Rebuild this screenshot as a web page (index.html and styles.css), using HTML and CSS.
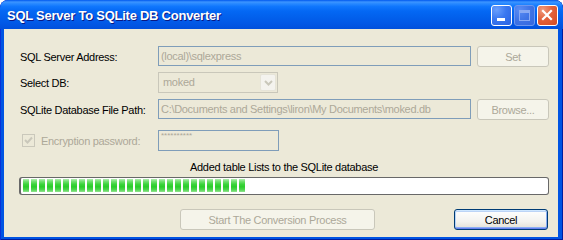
FILE: index.html
```html
<!DOCTYPE html>
<html lang="en">
<head>
  <meta charset="UTF-8" />
  <title>SQL Server To SQLite DB Converter</title>
  <link rel="stylesheet" href="styles.css">
</head>
<body>
  <div class="window">
    <div class="titlebar">
      <span class="title">SQL Server To SQLite DB Converter</span>
      <div class="controls">
        <span class="ctl ctl-min"><i></i></span>
        <span class="ctl ctl-max"><i></i></span>
        <span class="ctl ctl-close">
          <svg width="21" height="21" viewBox="0 0 21 21">
            <path d="M6 6 L14 14 M14 6 L6 14" stroke="#fff" stroke-width="2.2" stroke-linecap="square" fill="none"/>
          </svg>
        </span>
      </div>
    </div>

    <div class="client">
      <div class="row row-server">
        <label>SQL Server Address:</label>
        <div class="textbox">(local)\sqlexpress</div>
        <button class="btn" disabled>Set</button>
      </div>

      <div class="row row-db">
        <label>Select DB:</label>
        <div class="combo">
          <span class="combo-value">moked</span>
          <span class="combo-arrow">
            <svg width="9" height="6" viewBox="0 0 9 6">
              <polyline points="1,1 4.5,4.5 8,1" stroke="#c9c7ba" stroke-width="2" fill="none"/>
            </svg>
          </span>
        </div>
      </div>

      <div class="row row-path">
        <label>SQLite Database File Path:</label>
        <div class="textbox">C:\Documents and Settings\liron\My Documents\moked.db</div>
        <button class="btn" disabled>Browse...</button>
      </div>

      <div class="row row-pass">
        <label class="check">
          <span class="checkbox">
            <svg width="11" height="11" viewBox="0 0 11 11">
              <polyline points="2,5 4.5,7.5 9,2.5" stroke="#c9c7ba" stroke-width="2" fill="none"/>
            </svg>
          </span>
          Encryption password:
        </label>
        <div class="textbox textbox-pass">**********</div>
      </div>

      <div class="status">Added table Lists to the SQLite database</div>

      <div class="progress">
        <div class="progress-fill" style="width: 222px"></div>
      </div>

      <div class="actions">
        <button class="btn btn-start" disabled>Start The Conversion Process</button>
        <button class="btn btn-default">Cancel</button>
      </div>
    </div>
  </div>
</body>
</html>
```

FILE: styles.css
```css
* {
  box-sizing: border-box;
  margin: 0;
  padding: 0;
}

body {
  background-color: #fff;
  font-family: "Liberation Sans", Arial, sans-serif;
  font-size: 11px;
  letter-spacing: -0.3px;
}

.window {
  width: 563px;
  height: 240px;
  display: flex;
  flex-direction: column;
  background-color: #0054e3;
  border-radius: 8px 8px 0 0;
  overflow: hidden;
  box-shadow: inset 1px 0 #0831d9, inset -1px 0 #001ea0, inset 0 -1px #001ea0;
}

/* title bar */

.titlebar {
  height: 29px;
  flex-shrink: 0;
  display: flex;
  justify-content: space-between;
  padding: 0 5px 0 7px;
  background: linear-gradient(to bottom,
    #0058ee 0%, #3d95ff 7%, #2a8aff 12%, #1077fd 22%,
    #0468f4 38%, #0260ec 60%, #0258e6 80%, #0150dc 100%);
  border-radius: 8px 8px 0 0;
}

.title {
  color: #fff;
  font-weight: bold;
  font-size: 13px;
  letter-spacing: -0.25px;
  line-height: 16px;
  padding-top: 8px;
  text-shadow: 1px 1px #0a1883;
}

.controls {
  display: flex;
  gap: 2px;
  padding-top: 5px;
}

.ctl {
  width: 21px;
  height: 21px;
  border: 1px solid #fff;
  border-radius: 3px;
  position: relative;
}

.ctl-min {
  background: radial-gradient(circle at 25% 20%, #6a9ffd 0%, #3a78f0 45%, #2a62e2 100%);
}

.ctl-min i {
  position: absolute;
  left: 5px;
  top: 12px;
  width: 8px;
  height: 3px;
  background-color: #fff;
}

.ctl-max {
  border-color: #6d97ef;
  background: radial-gradient(circle at 25% 20%, #5a8cf4 0%, #3f74e6 50%, #3467de 100%);
}

.ctl-max i {
  position: absolute;
  left: 4px;
  top: 4px;
  width: 11px;
  height: 11px;
  border: 1px solid #88a9f3;
  border-top-width: 3px;
}

.ctl-close {
  background: radial-gradient(circle at 25% 20%, #f09a7c 0%, #e2623c 45%, #d44a22 100%);
}

.ctl-close svg {
  position: absolute;
  left: -1px;
  top: -1px;
}

/* client area */

.client {
  flex: 1;
  margin: 0 5px 3px 4px;
  background-color: #ece9d8;
  padding: 17px 0 0 16px;
}

.row {
  display: grid;
  grid-template-columns: 132px 313px 72px;
  column-gap: 6px;
  align-items: start;
  height: 21px;
}

.row label {
  align-self: center;
  color: #000;
}

.row-db {
  margin-top: 5px;
}

.row-path {
  margin-top: 6px;
}

.row-pass {
  margin-top: 10px;
  grid-template-columns: 132px 121px;
}

.textbox {
  height: 20px;
  border: 1px solid #7f9db9;
  color: #aca899;
  padding: 0 0 0 2px;
  line-height: 18px;
  white-space: nowrap;
  overflow: hidden;
}

.textbox-pass {
  height: 21px;
  font-size: 8px;
  line-height: 10px;
  letter-spacing: 0;
}

.combo {
  width: 120px;
  height: 21px;
  border: 1px solid #c9c7ba;
  display: flex;
  justify-content: space-between;
  padding: 1px;
}

.combo-value {
  color: #aca899;
  padding-left: 3px;
  line-height: 17px;
}

.combo-arrow {
  width: 16px;
  height: 17px;
  background-color: #f4f3ee;
  border: 1px solid #e6e4d8;
  border-radius: 2px;
  display: flex;
  align-items: center;
  justify-content: center;
}

.check {
  display: flex;
  align-items: center;
  gap: 6px;
  padding-left: 2px;
  color: #aca899 !important;
}

.checkbox {
  width: 13px;
  height: 13px;
  border: 1px solid #cac8bb;
  display: flex;
  align-items: center;
  justify-content: center;
}

.btn {
  height: 21px;
  font-family: inherit;
  font-size: 11px;
  letter-spacing: -0.3px;
  border: 1px solid #c9c7ba;
  border-radius: 3px;
  background-color: #f5f4ea;
  color: #aca899;
}

.status {
  width: 530px;
  margin: 9px 0 0 -1px;
  text-align: center;
  line-height: 14px;
  color: #000;
}

.progress {
  width: 530px;
  height: 18px;
  margin: 3px 0 0 -1px;
  border: 1px solid #686868;
  border-left-width: 2px;
  border-radius: 3px;
  background-color: #fff;
  padding: 1px 2px 2px 2px;
}

.progress-fill {
  height: 13px;
  background:
    repeating-linear-gradient(to right, transparent 0 6px, #fff 6px 8px),
    linear-gradient(to bottom, #b0eeae 0%, #74e072 18%, #3dd43c 40%, #2bcd2b 60%, #4fd54e 82%, #93e491 100%);
}

.actions {
  display: flex;
  margin: 14px 0 0 160px;
}

.btn-start {
  width: 195px;
}

.btn-default {
  width: 94px;
  margin-left: 79px;
  color: #000;
  border-color: #003c74;
  background: linear-gradient(to bottom, #fff 0%, #f3f3ef 60%, #e6e4dc 90%, #d6d0c5 100%);
  box-shadow: inset 0 1px #cee7ff, inset 0 -1px #6982ee, inset 1px 0 #b8d4f8, inset -1px 0 #89adf4,
    inset 0 2px #bcd4f6, inset 0 -2px #89adf4;
}
```
